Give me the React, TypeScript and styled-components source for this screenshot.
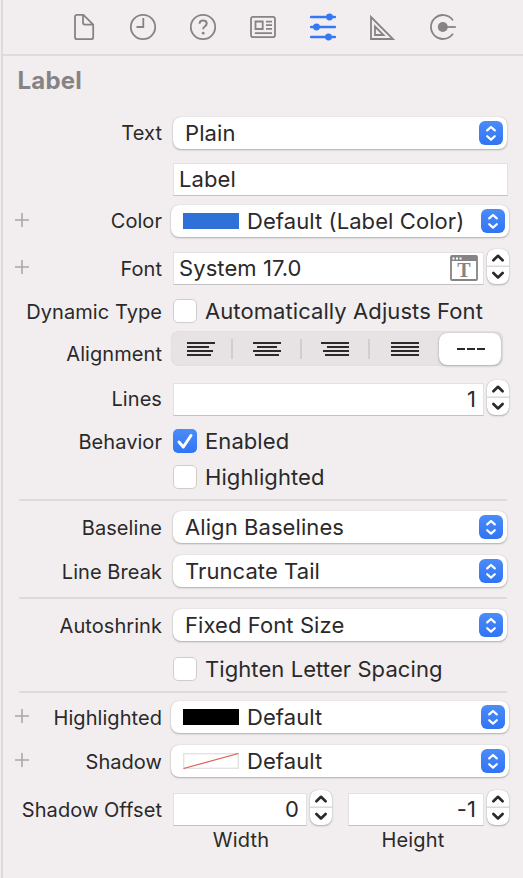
import React from 'react';
import styled, { createGlobalStyle, css } from 'styled-components';

const GlobalStyle = createGlobalStyle`
  * { box-sizing: border-box; }
  html, body { margin: 0; padding: 0; background: #f2eeef; }
  body { font-family: Inter, "Liberation Sans", sans-serif; color: #2b292a; overflow: hidden; }
`;

const Panel = styled.main`
  width: 523px;
  height: 878px;
  padding-left: 3px;
  background: linear-gradient(to right, #f2eeef 1px, #dedadc 1px 3px, #f2eeef 3px);
`;

const TabBar = styled.nav`
  height: 56px;
  padding: 0 65px 0 65px;
  display: flex;
  align-items: center;
  justify-content: space-between;
  border-bottom: 2px solid #dfdbdd;
`;

const Tab = styled.button<{ $active?: boolean }>`
  width: 30px;
  height: 30px;
  padding: 0;
  border: 0;
  background: none;
  color: ${(p) => (p.$active ? '#3478f6' : '#868384')};
  svg { display: block; }
`;

const Title = styled.h1`
  height: 55px;
  margin: 0;
  padding: 9px 0 0 14.5px;
  font-size: 24px;
  line-height: 32px;
  font-weight: 700;
  letter-spacing: 0.2px;
  color: #868384;
`;

const Row = styled.div<{ $h: number }>`
  height: ${(p) => p.$h}px;
  display: grid;
  grid-template-columns: 38px 121px 1fr;
  align-items: center;
`;

const AddButton = styled.button`
  width: 14px;
  height: 14px;
  margin: -3px 0 0 12px;
  padding: 0;
  border: 0;
  background: none;
  svg { display: block; }
`;

const FieldLabel = styled.span<{ $drop?: number }>`
  grid-column: 2;
  justify-self: end;
  white-space: nowrap;
  font-size: 20px;
  line-height: 24px;
  letter-spacing: 0.06px;
  padding-top: ${(p) => p.$drop ?? 0}px;
`;

const Controls = styled.div<{ $outset?: boolean }>`
  grid-column: 3;
  display: flex;
  align-items: center;
  padding-left: ${(p) => (p.$outset ? 9 : 11)}px;
`;

const valueText = css`
  font-size: 22px;
  line-height: 28px;
  letter-spacing: 0.08px;
  white-space: nowrap;
`;

const PopupBox = styled.div<{ $wide?: boolean }>`
  ${valueText}
  width: ${(p) => (p.$wide ? 338 : 334)}px;
  height: 32px;
  padding: 0 4px 0 12px;
  display: flex;
  align-items: center;
  border-radius: 8px;
  background: #fff;
  box-shadow: 0 0 1px rgba(0, 0, 0, 0.25), 0 1px 2px rgba(0, 0, 0, 0.26);
`;

const PopupText = styled.span`
  flex: 1;
`;

const PopupArrows = styled.span`
  width: 24px;
  height: 24px;
  border-radius: 6px;
  background: linear-gradient(#4a8cf8, #3174f4);
  svg { display: block; }
`;

const Swatch = styled.span<{ $color: string }>`
  width: 56px;
  height: 16px;
  margin-right: 8px;
  background: ${(p) => p.$color};
`;

const ClearSwatch = styled.svg`
  width: 56px;
  height: 16px;
  margin-right: 8px;
`;

const Field = styled.div<{ $w: number; $right?: boolean }>`
  ${valueText}
  width: ${(p) => p.$w}px;
  height: 33px;
  padding: 0 ${(p) => (p.$right ? 7 : 5)}px 0 5px;
  display: flex;
  align-items: center;
  justify-content: ${(p) => (p.$right ? 'flex-end' : 'space-between')};
  background: #fff;
  border: 1px solid #e4e1e2;
  border-bottom-color: #c4c1c2;
`;

const StepperBox = styled.div`
  width: 22px;
  height: 35px;
  margin: -4px 0 0 3px;
  border-radius: 8px;
  background: #fff;
  box-shadow: 0 0 1px rgba(0, 0, 0, 0.3), 0 1px 2px rgba(0, 0, 0, 0.25);
  svg { display: block; }
`;

const OffsetGap = styled.span`
  width: 16px;
`;

const CheckBox = styled.span<{ $on?: boolean }>`
  width: 24px;
  height: 24px;
  margin-right: 8px;
  border-radius: 5px;
  border: 1px solid #cfcccd;
  background: #fff;
  ${(p) =>
    p.$on &&
    css`
      border: 0;
      background: linear-gradient(#4a8cf8, #3174f4);
    `}
  svg { display: block; }
`;

const CheckText = styled.span`
  ${valueText}
`;

const Segments = styled.div`
  width: 332px;
  height: 35px;
  margin-top: 1px;
  padding: 0 2px 0 0;
  display: flex;
  align-items: center;
  border-radius: 8px;
  background: #e7e3e4;
  box-shadow: inset 0 0 1px rgba(0, 0, 0, 0.14);
`;

const Segment = styled.button<{ $line?: boolean; $selected?: boolean; $w: number }>`
  width: ${(p) => p.$w}px;
  height: ${(p) => (p.$selected ? 32 : 20)}px;
  padding: 0;
  border: 0;
  border-right: ${(p) => (p.$line ? '2px solid #d2ced0' : '0')};
  background: ${(p) => (p.$selected ? '#fff' : 'none')};
  display: flex;
  align-items: center;
  justify-content: center;
  ${(p) =>
    p.$selected &&
    css`
      padding-left: 2px;
      border-radius: 8px;
      box-shadow: 0 0 1px rgba(0, 0, 0, 0.3), 0 1px 3px rgba(0, 0, 0, 0.22);
    `}
`;

const Divider = styled.hr<{ $top?: number }>`
  height: 2px;
  margin: ${(p) => p.$top ?? 0}px 16px 0;
  border: 0;
  background: #dedadb;
`;

const Captions = styled.div`
  display: grid;
  grid-template-columns: 136px 136px;
  column-gap: 36px;
  padding-left: 170px;
  margin-top: -9px;
  text-align: center;
  font-size: 20px;
  line-height: 24px;
  letter-spacing: 0.2px;
`;

const IconT = styled.text`
  font-family: "Liberation Serif", serif;
  font-weight: 700;
  font-size: 20px;
`;

const ArrowsIcon = () => (
  <svg width="24" height="24" viewBox="0 0 24 24" fill="none" stroke="#fff" strokeWidth="2.2" strokeLinecap="round" strokeLinejoin="round">
    <path d="M8.2 9.4L12 6L15.8 9.4M8.2 15.2L12 18.6L15.8 15.2" />
  </svg>
);

const Stepper = () => (
  <StepperBox>
    <svg width="22" height="35" viewBox="0 0 22 35" fill="none" strokeLinecap="round" strokeLinejoin="round">
      <path d="M0 17.2H22" stroke="#dcdadb" strokeWidth="1.6" />
      <path d="M6.4 11.2L11 6.800L15.600 11.200M6.400 24L11 28.400L15.600 24" stroke="#2b292a" strokeWidth="2.7" />
    </svg>
  </StepperBox>
);

const Add = () => (
  <AddButton aria-label="Add">
    <svg width="14" height="14" viewBox="0 0 14 14" stroke="#aaa7a8" strokeWidth="1.6">
      <path d="M0 7H14M7 0V14" />
    </svg>
  </AddButton>
);

type PopupProps = { text: string; wide?: boolean; swatch?: React.ReactNode };
const Popup = ({ text, wide, swatch }: PopupProps) => (
  <PopupBox $wide={wide}>
    {swatch}
    <PopupText>{text}</PopupText>
    <PopupArrows><ArrowsIcon /></PopupArrows>
  </PopupBox>
);

type CheckProps = { text: string; on?: boolean };
const Check = ({ text, on }: CheckProps) => (
  <>
    <CheckBox $on={on}>
      {on && (
        <svg width="24" height="24" viewBox="0 0 24 24" fill="none" stroke="#fff" strokeWidth="3" strokeLinecap="round" strokeLinejoin="round">
          <path d="M6 13L10.300 18L18 6.500" />
        </svg>
      )}
    </CheckBox>
    <CheckText>{text}</CheckText>
  </>
);

const AlignIcon = ({ d }: { d: string }) => (
  <svg width="28" height="16" viewBox="0 0 28 16" stroke="#2b292a" strokeWidth="2">
    <path d={d} />
  </svg>
);

const FontIcon = () => (
  <svg width="28" height="26" viewBox="0 0 28 26">
    <rect x="1" y="1" width="26" height="24" rx="1" fill="none" stroke="#868384" strokeWidth="1.8" />
    <path d="M1 1H27V6H1Z" fill="#868384" />
    <path d="M2.500 2.400H4.500V4.400H2.500ZM6 2.400H8V4.400H6ZM9.500 2.400H11.500V4.400H9.500Z" fill="#fff" />
    <IconT x="14" y="21.800" textAnchor="middle" fill="#868384">T</IconT>
  </svg>
);

const tabs: { name: string; active?: boolean; icon: React.ReactNode }[] = [
  { name: 'File', icon: (
    <path d="M14.800 2.800H9Q7 2.800 7 4.800V25.200Q7 27.200 9 27.200H23.200Q25.200 27.200 25.200 25.200V12.600L15.400 2.800ZM15 3V10.600Q15 12.600 17 12.600H25" />
  ) },
  { name: 'History', icon: <><circle cx="15" cy="15" r="12.2" /><path d="M15.300 6V15H8.500" /></> },
  { name: 'Help', icon: (
    <><circle cx="15" cy="15" r="12.200" /><path d="M11.500 11.800Q11.600 8.500 15 8.500Q18.700 8.500 18.700 11.600Q18.700 13.300 16.700 14.500Q15.200 15.400 15.200 17.300" strokeWidth="2" /><circle cx="15.200" cy="21.200" r="1.400" fill="currentColor" stroke="none" /></>
  ) },
  { name: 'Identity', icon: (
    <><rect x="3" y="4.800" width="24" height="20.400" rx="2.200" /><path d="M7.500 9.500H14.700V17H7.500ZM18 9.600H24M18 13.200H24M18 16.800H24M6.800 21.200H24" /></>
  ) },
  { name: 'Attributes', active: true, icon: (
    <><path d="M3.200 5H26.800M3.200 15H26.800M3.200 25H26.800" strokeWidth="2.600" strokeLinecap="round" /><g fill="currentColor" stroke="none"><circle cx="21.500" cy="5" r="3.400" /><circle cx="8.500" cy="15" r="3.400" /><circle cx="20.500" cy="25" r="3.400" /></g></>
  ) },
  { name: 'Size', icon: <path d="M3 5V27H25ZM7 14.500V23H15.500Z" /> },
  { name: 'Connections', icon: (
    <><path d="M24.500 7.700A12 12 0 1 0 24.500 22.300" strokeLinecap="round" /><circle cx="14.800" cy="15" r="5" fill="currentColor" stroke="none" /><path d="M15 15H27.800" /></>
  ) },
];

export default function App() {
  return (
    <>
      <GlobalStyle />
      <Panel>
        <TabBar>
          {tabs.map((t) => (
            <Tab key={t.name} aria-label={t.name} $active={t.active}>
              <svg width="30" height="30" viewBox="0 0 30 30" fill="none" stroke="currentColor" strokeWidth="1.8">{t.icon}</svg>
            </Tab>
          ))}
        </TabBar>
        <Title>Label</Title>
        <Row $h={44}>
          <FieldLabel>Text</FieldLabel>
          <Controls><Popup text="Plain" /></Controls>
        </Row>
        <Row $h={48}>
          <Controls><Field $w={335}>Label</Field></Controls>
        </Row>
        <Row $h={36}>
          <Add />
          <FieldLabel>Color</FieldLabel>
          <Controls $outset><Popup wide text="Default (Label Color)" swatch={<Swatch $color="#3071d9" />} /></Controls>
        </Row>
        <Row $h={58}>
          <Add />
          <FieldLabel $drop={2}>Font</FieldLabel>
          <Controls><Field $w={311}>System 17.0<FontIcon /></Field><Stepper /></Controls>
        </Row>
        <Row $h={28}>
          <FieldLabel $drop={1}>Dynamic Type</FieldLabel>
          <Controls><Check text="Automatically Adjusts Font" /></Controls>
        </Row>
        <Row $h={46}>
          <FieldLabel $drop={11}>Alignment</FieldLabel>
          <Controls $outset>
            <Segments>
              <Segment $w={62} $line aria-label="Left"><AlignIcon d="M0 2H28M0 6H22M0 10H26M0 14H24" /></Segment>
              <Segment $w={69} $line aria-label="Center"><AlignIcon d="M0 2H28M4 6H24M0 10H28M2 14H26" /></Segment>
              <Segment $w={68} $line aria-label="Right"><AlignIcon d="M0 2H28M6 6H28M2 10H28M4 14H28" /></Segment>
              <Segment $w={69} aria-label="Justified"><AlignIcon d="M0 2H28M0 6H28M0 10H28M0 14H28" /></Segment>
              <Segment $w={62} $selected aria-label="Natural"><AlignIcon d="M0 8H8M10 8H18M20 8H28" /></Segment>
            </Segments>
          </Controls>
        </Row>
        <Row $h={56}>
          <FieldLabel>Lines</FieldLabel>
          <Controls><Field $w={311} $right>1</Field><Stepper /></Controls>
        </Row>
        <Row $h={28}>
          <FieldLabel $drop={1}>Behavior</FieldLabel>
          <Controls><Check on text="Enabled" /></Controls>
        </Row>
        <Row $h={44}>
          <Controls><Check text="Highlighted" /></Controls>
        </Row>
        <Divider />
        <Row $h={52}>
          <FieldLabel $drop={1}>Baseline</FieldLabel>
          <Controls><Popup text="Align Baselines" /></Controls>
        </Row>
        <Row $h={36}>
          <FieldLabel $drop={1}>Line Break</FieldLabel>
          <Controls><Popup text="Truncate Tail" /></Controls>
        </Row>
        <Divider $top={8} />
        <Row $h={52}>
          <FieldLabel $drop={1}>Autoshrink</FieldLabel>
          <Controls><Popup text="Fixed Font Size" /></Controls>
        </Row>
        <Row $h={36}>
          <Controls><Check text="Tighten Letter Spacing" /></Controls>
        </Row>
        <Divider $top={4} />
        <Row $h={48}>
          <Add />
          <FieldLabel $drop={1}>Highlighted</FieldLabel>
          <Controls $outset><Popup wide text="Default" swatch={<Swatch $color="#000" />} /></Controls>
        </Row>
        <Row $h={40}>
          <Add />
          <FieldLabel $drop={1}>Shadow</FieldLabel>
          <Controls $outset>
            <Popup
              wide
              text="Default"
              swatch={
                <ClearSwatch viewBox="0 0 56 16" fill="none">
                  <rect x="0.700" y="0.700" width="54.600" height="14.600" stroke="#e2e4e4" strokeWidth="1.400" />
                  <path d="M0.500 15.500L55.500 0.500" stroke="#e0605a" strokeWidth="1.200" />
                </ClearSwatch>
              }
            />
          </Controls>
        </Row>
        <Row $h={56}>
          <FieldLabel $drop={1}>Shadow Offset</FieldLabel>
          <Controls>
            <Field $w={134} $right>0</Field><Stepper />
            <OffsetGap />
            <Field $w={136} $right>-1</Field><Stepper />
          </Controls>
        </Row>
        <Captions><span>Width</span><span>Height</span></Captions>
      </Panel>
    </>
  );
}
